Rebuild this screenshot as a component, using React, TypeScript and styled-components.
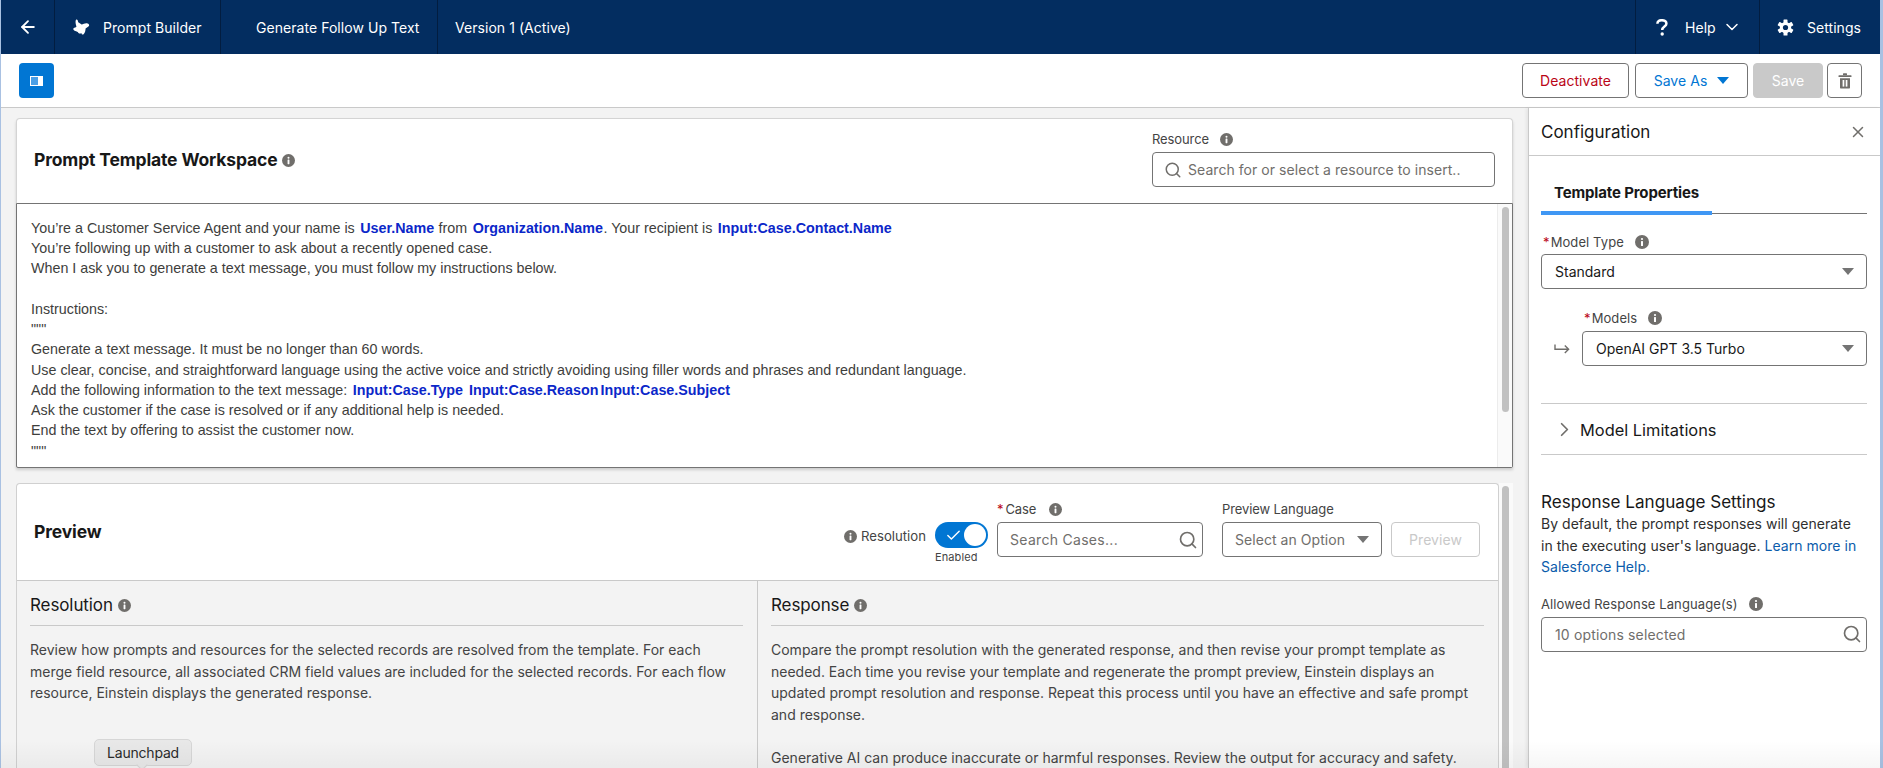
import React from "react";
import styled, { createGlobalStyle } from "styled-components";
import { ArrowLeft, ChevronDown, ChevronRight, Search, X, Check } from "lucide-react";

const Global = createGlobalStyle`
  html, body { margin: 0; padding: 0; }
  body { font-family: Inter, "Liberation Sans", sans-serif; color: #181818; background: #a9c1e2; }
  * { box-sizing: border-box; }
`;

const Page = styled.div`
  position: relative;
  width: 1883px;
  height: 768px;
  overflow: hidden;
  display: flex;
  flex-direction: column;
  padding: 0 3px 0 1px;
  background: #a9c1e2;
`;
const Header = styled.header`
  height: 54px;
  flex: none;
  display: flex;
  align-items: stretch;
  background: #032d60;
  color: #fff;
  font-size: 14px;
  letter-spacing: 0.05px;
`;
const HeaderCell = styled.div<{ $w?: number; $pl?: number; $side?: "left" | "right" | "none" }>`
  display: flex;
  align-items: center;
  width: ${(p) => (p.$w ? `${p.$w}px` : "auto")};
  padding-left: ${(p) => p.$pl ?? 0}px;
  border-right: ${(p) => (!p.$side || p.$side === "right" ? "1px solid #021d40" : "0")};
  border-left: ${(p) => (p.$side === "left" ? "1px solid #021d40" : "0")};
`;
const HeaderSpacer = styled.div`
  flex: 1;
`;
const LogoText = styled.span`
  margin-left: 13px;
`;
const HelpLabel = styled.span`
  margin-left: 17px;
`;
const HelpChevron = styled(ChevronDown)`
  margin-left: 6px;
`;
const Toolbar = styled.div`
  height: 54px;
  flex: none;
  display: flex;
  align-items: center;
  justify-content: space-between;
  padding: 0 18px 0 18px;
  background: #fff;
  border-bottom: 1px solid #c9c9c9;
`;
const PanelToggle = styled.button`
  width: 35px;
  height: 35px;
  padding: 0;
  display: grid;
  place-items: center;
  border: 0;
  border-radius: 4px;
  background: #0176d3;
`;
const ActionRow = styled.div`
  display: flex;
  gap: 5px;
  align-items: center;
`;
const ActionButton = styled.button<{ $w: number; $ml?: number; $color?: string; $disabled?: boolean }>`
  width: ${(p) => p.$w}px;
  height: 35px;
  margin-left: ${(p) => p.$ml ?? 0}px;
  padding: 0;
  display: flex;
  align-items: center;
  justify-content: center;
  gap: 10px;
  border-radius: 4px;
  border: 1px solid ${(p) => (p.$disabled ? "#c9c9c9" : "#747474")};
  background: ${(p) => (p.$disabled ? "#c9c9c9" : "#fff")};
  color: ${(p) => (p.$disabled ? "#fff" : p.$color ?? "#0176d3")};
  font: 400 14px Inter, sans-serif;
  letter-spacing: 0.05px;
`;
const Body = styled.div`
  flex: 1;
  min-height: 0;
  display: flex;
  background: #f3f3f3;
`;
const Main = styled.main`
  flex: 1;
  min-width: 0;
  padding: 10px 15px 0;
`;
const WorkspaceCard = styled.section`
  height: 350px;
  display: flex;
  flex-direction: column;
  background: #fff;
  border-radius: 4px 4px 0 0;
  border: 1px solid #d4d4d4;
  border-bottom: 0;
  box-shadow: 0 2px 3px rgba(0, 0, 0, 0.16);
`;
const WorkspaceHead = styled.div`
  height: 84px;
  flex: none;
  display: flex;
  align-items: flex-start;
  justify-content: space-between;
  padding: 12px 17px 0 17px;
`;
const Title = styled.h2`
  margin: 18px 0 0;
  display: flex;
  align-items: center;
  gap: 5px;
  font-size: 17.5px;
  line-height: 22px;
  font-weight: 700;
  letter-spacing: -0.15px;
`;
const FieldLabel = styled.label<{ $gap?: number }>`
  display: flex;
  align-items: center;
  height: 16px;
  margin-bottom: ${(p) => p.$gap ?? 5}px;
  font-size: 13px;
  color: #444;
  letter-spacing: -0.1px;
  white-space: nowrap;
`;
const ConfigLabel = styled(FieldLabel)`
  letter-spacing: 0.1px;
`;
const Star = styled.span`
  color: #ba0517;
  margin-right: 2px;
`;
const ConfigStar = styled(Star)`
  margin-left: 2px;
  margin-right: 1px;
`;
const LabelInfo = styled.span`
  display: inline-flex;
  margin-left: 11px;
`;
const CaseInfo = styled(LabelInfo)`
  margin-left: 13px;
`;
const Field = styled.div<{ $w?: number }>`
  width: ${(p) => (p.$w ? `${p.$w}px` : "100%")};
`;
const LanguageField = styled(Field)`
  margin: 0 9px 0 19px;
`;
const InputBox = styled.div<{ $h?: number; $pl?: number }>`
  height: ${(p) => p.$h ?? 35}px;
  display: flex;
  align-items: center;
  justify-content: space-between;
  padding: 0 7px 0 ${(p) => p.$pl ?? 13}px;
  background: #fff;
  border: 1px solid #747474;
  border-radius: 4px;
  font-size: 14px;
  color: #181818;
  white-space: nowrap;
`;
const Placeholder = styled.span<{ $ls?: number }>`
  color: #706e6b;
  letter-spacing: ${(p) => p.$ls ?? 0.05}px;
`;
const ResourceInput = styled(InputBox)`
  justify-content: flex-start;
  gap: 6px;
  padding-left: 11px;
`;
const EndSearch = styled(Search)`
  margin-right: -3px;
`;
const Editor = styled.div`
  flex: 1;
  min-height: 0;
  margin: 0 -1px;
  display: flex;
  border: 1px solid #747474;
  border-radius: 0 0 2px 2px;
  background: #fff;
`;
const EditorText = styled.div`
  flex: 1;
  padding: 13.5px 14px 0;
  font-family: "Liberation Sans", Arial, sans-serif;
  font-size: 14.3px;
  line-height: 20.3px;
  color: #3e3e3c;
  white-space: nowrap;
`;
const Merge = styled.strong`
  color: #0b27c9;
  font-weight: 700;
  margin: 0 0.5px 0 1.5px;
`;
const ScrollTrack = styled.div`
  width: 15px;
  flex: none;
  padding: 3px 4px 0;
  background: #fafafa;
  border-left: 1px solid #ececec;
`;
const ScrollThumb = styled.div<{ $h: number }>`
  width: 7px;
  height: ${(p) => p.$h}px;
  border-radius: 4px;
  background: #c1c1c1;
`;
const PreviewRow = styled.div`
  display: flex;
  margin-top: 15px;
`;
const PreviewCard = styled.section`
  width: 1483px;
  flex: none;
  background: #f3f3f3;
  border: 1px solid #d0d0d0;
  border-bottom: 0;
  border-radius: 4px 4px 0 0;
`;
const PreviewHead = styled.div`
  height: 97px;
  display: flex;
  justify-content: space-between;
  align-items: center;
  padding: 0 18px 0 17px;
  background: #fff;
  border-radius: 4px 4px 0 0;
  border-bottom: 1px solid #c9c9c9;
`;
const PreviewTitle = styled.h2`
  margin: 0 0 2px;
  font-size: 17.5px;
  font-weight: 700;
  letter-spacing: -0.15px;
`;
const Controls = styled.div`
  display: flex;
  align-self: flex-start;
  align-items: flex-start;
  padding-top: 17px;
`;
const ResolutionGroup = styled.div`
  display: flex;
  align-items: flex-start;
  margin-top: 21px;
  margin-right: 9px;
`;
const ResolutionLabel = styled.span`
  display: flex;
  align-items: center;
  gap: 4px;
  height: 28px;
  margin-right: 9px;
  font-size: 13.2px;
  color: #444;
  letter-spacing: 0;
`;
const ToggleColumn = styled.div`
  display: flex;
  flex-direction: column;
`;
const ToggleTrack = styled.div`
  position: relative;
  width: 53px;
  height: 26px;
  display: flex;
  align-items: center;
  padding-left: 10px;
  border-radius: 13px;
  background: #0176d3;
`;
const ToggleKnob = styled.span`
  position: absolute;
  right: 2px;
  top: 2px;
  width: 22px;
  height: 22px;
  border-radius: 50%;
  background: #fff;
`;
const ToggleText = styled.span`
  margin-top: 2px;
  font-size: 11px;
  line-height: 14px;
  letter-spacing: 0.1px;
  color: #444;
`;
const DisabledPreview = styled.button`
  width: 89px;
  height: 35px;
  margin-top: 21px;
  padding: 0;
  background: #fff;
  border: 1px solid #c9c9c9;
  border-radius: 4px;
  color: #c9c9c9;
  font: 400 14px Inter, sans-serif;
  letter-spacing: 0.05px;
`;
const Panes = styled.div`
  display: grid;
  grid-template-columns: 741px 1fr;
`;
const Pane = styled.div<{ $divider?: boolean }>`
  padding: 12px 14px 0 13px;
  border-right: ${(p) => (p.$divider ? "1px solid #c9c9c9" : "0")};
  height: 187px;
`;
const PaneHeading = styled.h3`
  margin: 0;
  height: 33px;
  padding-bottom: 8px;
  display: flex;
  align-items: center;
  gap: 5px;
  font-size: 17px;
  line-height: 24px;
  font-weight: 400;
  letter-spacing: -0.1px;
  border-bottom: 1px solid #c9c9c9;
`;
const PaneText = styled.p`
  margin: 13px 0 0;
  font-size: 14px;
  line-height: 21.5px;
  color: #444;
  white-space: nowrap;
`;
const OuterScroll = styled.div`
  width: 14px;
  flex: none;
  height: 290px;
  padding: 3px 2px 0 3px;
  background: #fafafa;
`;
const ConfigPanel = styled.aside`
  width: 352px;
  flex: none;
  background: #fff;
  border-left: 1px solid #c9c9c9;
  box-shadow: -2px 0 3px rgba(0, 0, 0, 0.06);
`;
const ConfigHead = styled.div`
  height: 48px;
  display: flex;
  align-items: center;
  justify-content: space-between;
  padding: 0 13px 0 12px;
  border-bottom: 1px solid #c9c9c9;
  font-size: 17px;
`;
const ConfigBody = styled.div`
  padding: 25px 13px 0 12px;
`;
const Tabs = styled.div`
  height: 33px;
  border-bottom: 1px solid #747474;
`;
const ActiveTab = styled.div`
  width: 171px;
  height: 34px;
  padding: 2px 0 0 13px;
  font-size: 15px;
  line-height: 20px;
  font-weight: 700;
  letter-spacing: -0.15px;
  border-bottom: 4px solid #3f97f4;
`;
const FormStack = styled.div`
  margin-top: 20px;
`;
const Caret = styled.span<{ $color?: string; $mr?: number }>`
  width: 0;
  height: 0;
  margin-right: ${(p) => p.$mr ?? 5}px;
  border-left: 6px solid transparent;
  border-right: 6px solid transparent;
  border-top: 7px solid ${(p) => p.$color ?? "#747474"};
`;
const NestedGrid = styled.div`
  margin-top: 21px;
  display: grid;
  grid-template-columns: 41px 1fr;
`;
const ReturnCell = styled.div`
  display: flex;
  align-items: center;
  padding-left: 13px;
`;
const NestedLabelCell = styled.div`
  grid-column: 2;
`;
const Accordion = styled.div`
  margin-top: 37px;
  height: 52px;
  display: flex;
  align-items: center;
  gap: 4px;
  padding: 1px 0 0 12px;
  border-top: 1px solid #c9c9c9;
  border-bottom: 1px solid #c9c9c9;
  font-size: 16.4px;
  color: #181818;
`;
const SectionTitle = styled.h3`
  margin: 36px 0 0;
  font-size: 17.1px;
  line-height: 22px;
  font-weight: 400;
`;
const SectionText = styled.p`
  margin: 0;
  font-size: 14px;
  line-height: 21.5px;
  letter-spacing: 0.03px;
  color: #2e2e2e;
  white-space: nowrap;
`;
const HelpLink = styled.a`
  color: #0b5cab;
`;
const AllowedField = styled(Field)`
  margin-top: 18px;
`;
const Tooltip = styled.div`
  position: absolute;
  left: 94px;
  top: 739px;
  width: 98px;
  height: 27px;
  display: grid;
  place-items: center;
  background: #e8e8e8;
  border: 1px solid #d6d6d6;
  border-radius: 5px;
  font-size: 14px;
  color: #2b2b2b;
  letter-spacing: -0.2px;
  &::after {
    content: "";
    position: absolute;
    left: 43px;
    bottom: -4px;
    width: 7px;
    height: 7px;
    background: #e8e8e8;
    transform: rotate(45deg);
    border-right: 1px solid #d6d6d6;
    border-bottom: 1px solid #d6d6d6;
  }
`;
const DockFade = styled.div`
  position: absolute;
  left: 0;
  right: 0;
  bottom: 0;
  height: 28px;
  pointer-events: none;
  background: linear-gradient(rgba(0, 0, 0, 0), rgba(0, 0, 0, 0.035));
`;

const Info = ({ size = 14 }: { size?: number }) => (
  <svg width={size} height={size} viewBox="0 0 14 14" aria-hidden="true">
    <circle cx="7" cy="7" r="7" fill="#706e6b" />
    <rect x="6" y="6" width="2" height="5" rx="0.5" fill="#fff" />
    <circle cx="7" cy="4" r="1.1" fill="#fff" />
  </svg>
);

const Logo = () => (
  <svg width="17" height="17" viewBox="0 0 17 17" aria-hidden="true">
    <path
      d="M3.2 0.6 C4.6 0.4 5 1.8 5.2 3.2 C6.2 3.8 7.4 4.8 8.6 5.4 C10.4 4.8 12.8 3.6 14.6 4.4 C16.4 5 16.6 6.6 15.4 7.6 C14.4 8.4 13.6 8.8 12.6 9.6 C12.4 11.4 12.2 13.8 10.8 15 C9.6 16.2 8.6 15.4 8.4 14 C7 15 5 14.4 4.8 13 C4 12.2 2.4 12.2 1.2 11.4 C-0.2 10.4 0.2 9 1.4 8.8 C2.6 8.4 3.2 8 3.4 7.4 C3 5.8 1.8 2.4 3.2 0.6 Z"
      fill="#fff"
    />
  </svg>
);

const Question = () => (
  <svg width="12" height="17" viewBox="0 0 12 17" aria-hidden="true">
    <path d="M1.4 4.8 C1.4 2.4 3.4 1.2 5.8 1.2 C8.4 1.2 10.4 2.6 10.4 4.8 C10.4 7.6 6.2 7.6 6.2 11" fill="none" stroke="#fff" strokeWidth="2.5" />
    <circle cx="6.2" cy="15" r="1.7" fill="#fff" />
  </svg>
);

const Gear = () => (
  <svg width="17" height="17" viewBox="0 0 17 17" aria-hidden="true">
    {[0, 60, 120, 180, 240, 300].map((a) => (
      <rect key={a} x="6.5" y="0.4" width="4" height="4" rx="0.6" fill="#fff" transform={`rotate(${a} 8.5 8.5)`} />
    ))}
    <circle cx="8.5" cy="8.5" r="5.6" fill="#fff" />
    <circle cx="8.5" cy="8.5" r="2.6" fill="#032d60" />
  </svg>
);

const PanelIcon = () => (
  <svg width="13" height="10" viewBox="0 0 13 10" aria-hidden="true">
    <rect x="0.5" y="0.5" width="12" height="9" fill="#4a9fe6" stroke="#fff" strokeWidth="1" />
    <rect x="8" y="1" width="4.5" height="8" fill="#fff" />
  </svg>
);

const Trash = () => (
  <svg width="14" height="16" viewBox="0 0 14 16" aria-hidden="true">
    <rect x="5" y="0.3" width="4" height="2" rx="0.5" fill="#706e6b" />
    <rect x="0.5" y="2.2" width="13" height="1.8" rx="0.5" fill="#706e6b" />
    <path d="M2 5.2 H12 V14.6 C12 15.2 11.6 15.6 11 15.6 H3 C2.4 15.6 2 15.2 2 14.6 Z" fill="#706e6b" />
    <rect x="4.6" y="7" width="1.7" height="6.6" fill="#fff" />
    <rect x="7.7" y="7" width="1.7" height="6.6" fill="#fff" />
  </svg>
);

const ReturnArrow = () => (
  <svg width="16" height="10" viewBox="0 0 16 10" aria-hidden="true">
    <path d="M1 0.5 V5.2 H14.5 M10.8 1.4 L14.6 5.2 L10.8 9" fill="none" stroke="#706e6b" strokeWidth="1.4" />
  </svg>
);

export default function App() {
  return (
    <>
      <Global />
      <Page>
        <Header>
          <HeaderCell $w={54} $pl={17}>
            <ArrowLeft size={20} color="#fff" strokeWidth={2.2} />
          </HeaderCell>
          <HeaderCell $w={166} $pl={18}>
            <Logo />
            <LogoText>Prompt Builder</LogoText>
          </HeaderCell>
          <HeaderCell $w={217} $pl={35}>Generate Follow Up Text</HeaderCell>
          <HeaderCell $pl={17} $side="none">Version 1 (Active)</HeaderCell>
          <HeaderSpacer />
          <HeaderCell $w={124} $pl={20} $side="left">
            <Question />
            <HelpLabel>Help</HelpLabel>
            <HelpChevron size={20} color="#fff" strokeWidth={1.8} />
          </HeaderCell>
          <HeaderCell $w={121} $pl={17} $side="left">
            <Gear />
            <LogoText>Settings</LogoText>
          </HeaderCell>
        </Header>
        <Toolbar>
          <PanelToggle aria-label="Toggle panel">
            <PanelIcon />
          </PanelToggle>
          <ActionRow>
            <ActionButton $w={107} $color="#ba0517">Deactivate</ActionButton>
            <ActionButton $w={113} $ml={1}>
              Save As
              <Caret $color="#0176d3" $mr={0} />
            </ActionButton>
            <ActionButton $w={70} $disabled>Save</ActionButton>
            <ActionButton $w={35} $ml={-1} aria-label="Delete">
              <Trash />
            </ActionButton>
          </ActionRow>
        </Toolbar>
        <Body>
          <Main>
            <WorkspaceCard>
              <WorkspaceHead>
                <Title>
                  Prompt Template Workspace <Info size={13} />
                </Title>
                <Field $w={343}>
                  <FieldLabel>
                    Resource
                    <LabelInfo><Info size={13} /></LabelInfo>
                  </FieldLabel>
                  <ResourceInput>
                    <Search size={18} color="#706e6b" />
                    <Placeholder>Search for or select a resource to insert..</Placeholder>
                  </ResourceInput>
                </Field>
              </WorkspaceHead>
              <Editor>
                <EditorText>
                  You’re a Customer Service Agent and your name is <Merge>User.Name</Merge> from <Merge>Organization.Name</Merge>. Your recipient is <Merge>Input:Case.Contact.Name</Merge>
                  <br />
                  You’re following up with a customer to ask about a recently opened case.
                  <br />
                  When I ask you to generate a text message, you must follow my instructions below.
                  <br />
                  <br />
                  Instructions:
                  <br />
                  """
                  <br />
                  Generate a text message. It must be no longer than 60 words.
                  <br />
                  Use clear, concise, and straightforward language using the active voice and strictly avoiding using filler words and phrases and redundant language.
                  <br />
                  Add the following information to the text message: <Merge>Input:Case.Type</Merge> <Merge>Input:Case.Reason</Merge><Merge>Input:Case.Subject</Merge>
                  <br />
                  Ask the customer if the case is resolved or if any additional help is needed.
                  <br />
                  End the text by offering to assist the customer now.
                  <br />
                  """
                </EditorText>
                <ScrollTrack>
                  <ScrollThumb $h={205} />
                </ScrollTrack>
              </Editor>
            </WorkspaceCard>
            <PreviewRow>
              <PreviewCard>
                <PreviewHead>
                  <PreviewTitle>Preview</PreviewTitle>
                  <Controls>
                    <ResolutionGroup>
                      <ResolutionLabel>
                        <Info size={13} />
                        Resolution
                      </ResolutionLabel>
                      <ToggleColumn>
                        <ToggleTrack>
                          <Check size={17} color="#fff" strokeWidth={2} />
                          <ToggleKnob />
                        </ToggleTrack>
                        <ToggleText>Enabled</ToggleText>
                      </ToggleColumn>
                    </ResolutionGroup>
                    <Field $w={206}>
                      <FieldLabel>
                        <Star>*</Star>Case
                        <CaseInfo><Info size={13} /></CaseInfo>
                      </FieldLabel>
                      <InputBox $pl={12}>
                        <Placeholder $ls={0.3}>Search Cases...</Placeholder>
                        <EndSearch size={20} color="#706e6b" />
                      </InputBox>
                    </Field>
                    <LanguageField $w={160}>
                      <FieldLabel>Preview Language</FieldLabel>
                      <InputBox $pl={12}>
                        <Placeholder>Select an Option</Placeholder>
                        <Caret />
                      </InputBox>
                    </LanguageField>
                    <DisabledPreview>Preview</DisabledPreview>
                  </Controls>
                </PreviewHead>
                <Panes>
                  <Pane $divider>
                    <PaneHeading>
                      Resolution <Info size={13} />
                    </PaneHeading>
                    <PaneText>
                      Review how prompts and resources for the selected records are resolved from the template. For each
                      <br />
                      merge field resource, all associated CRM field values are included for the selected records. For each flow
                      <br />
                      resource, Einstein displays the generated response.
                    </PaneText>
                  </Pane>
                  <Pane>
                    <PaneHeading>
                      Response <Info size={13} />
                    </PaneHeading>
                    <PaneText>
                      Compare the prompt resolution with the generated response, and then revise your prompt template as
                      <br />
                      needed. Each time you revise your template and regenerate the prompt preview, Einstein displays an
                      <br />
                      updated prompt resolution and response. Repeat this process until you have an effective and safe prompt
                      <br />
                      and response.
                      <br />
                      <br />
                      Generative AI can produce inaccurate or harmful responses. Review the output for accuracy and safety.
                    </PaneText>
                  </Pane>
                </Panes>
              </PreviewCard>
              <OuterScroll>
                <ScrollThumb $h={287} />
              </OuterScroll>
            </PreviewRow>
          </Main>
          <ConfigPanel>
            <ConfigHead>
              Configuration
              <X size={18} color="#706e6b" />
            </ConfigHead>
            <ConfigBody>
              <Tabs>
                <ActiveTab>Template Properties</ActiveTab>
              </Tabs>
              <FormStack>
                <Field>
                  <ConfigLabel $gap={4}>
                    <ConfigStar>*</ConfigStar>Model Type
                    <LabelInfo><Info size={14} /></LabelInfo>
                  </ConfigLabel>
                  <InputBox>
                    Standard
                    <Caret />
                  </InputBox>
                </Field>
                <NestedGrid>
                  <NestedLabelCell>
                    <ConfigLabel>
                      <ConfigStar>*</ConfigStar>Models
                      <LabelInfo><Info size={14} /></LabelInfo>
                    </ConfigLabel>
                  </NestedLabelCell>
                  <ReturnCell>
                    <ReturnArrow />
                  </ReturnCell>
                  <InputBox>
                    OpenAI GPT 3.5 Turbo
                    <Caret />
                  </InputBox>
                </NestedGrid>
                <Accordion>
                  <ChevronRight size={23} color="#706e6b" strokeWidth={1.8} />
                  Model Limitations
                </Accordion>
                <SectionTitle>Response Language Settings</SectionTitle>
                <SectionText>
                  By default, the prompt responses will generate
                  <br />
                  in the executing user's language. <HelpLink>Learn more in</HelpLink>
                  <br />
                  <HelpLink>Salesforce Help.</HelpLink>
                </SectionText>
                <AllowedField>
                  <ConfigLabel>
                    Allowed Response Language(s)
                    <LabelInfo><Info size={14} /></LabelInfo>
                  </ConfigLabel>
                  <InputBox>
                    <Placeholder $ls={0.15}>10 options selected</Placeholder>
                    <EndSearch size={20} color="#706e6b" />
                  </InputBox>
                </AllowedField>
              </FormStack>
            </ConfigBody>
          </ConfigPanel>
        </Body>
        <Tooltip>Launchpad</Tooltip>
        <DockFade />
      </Page>
    </>
  );
}
